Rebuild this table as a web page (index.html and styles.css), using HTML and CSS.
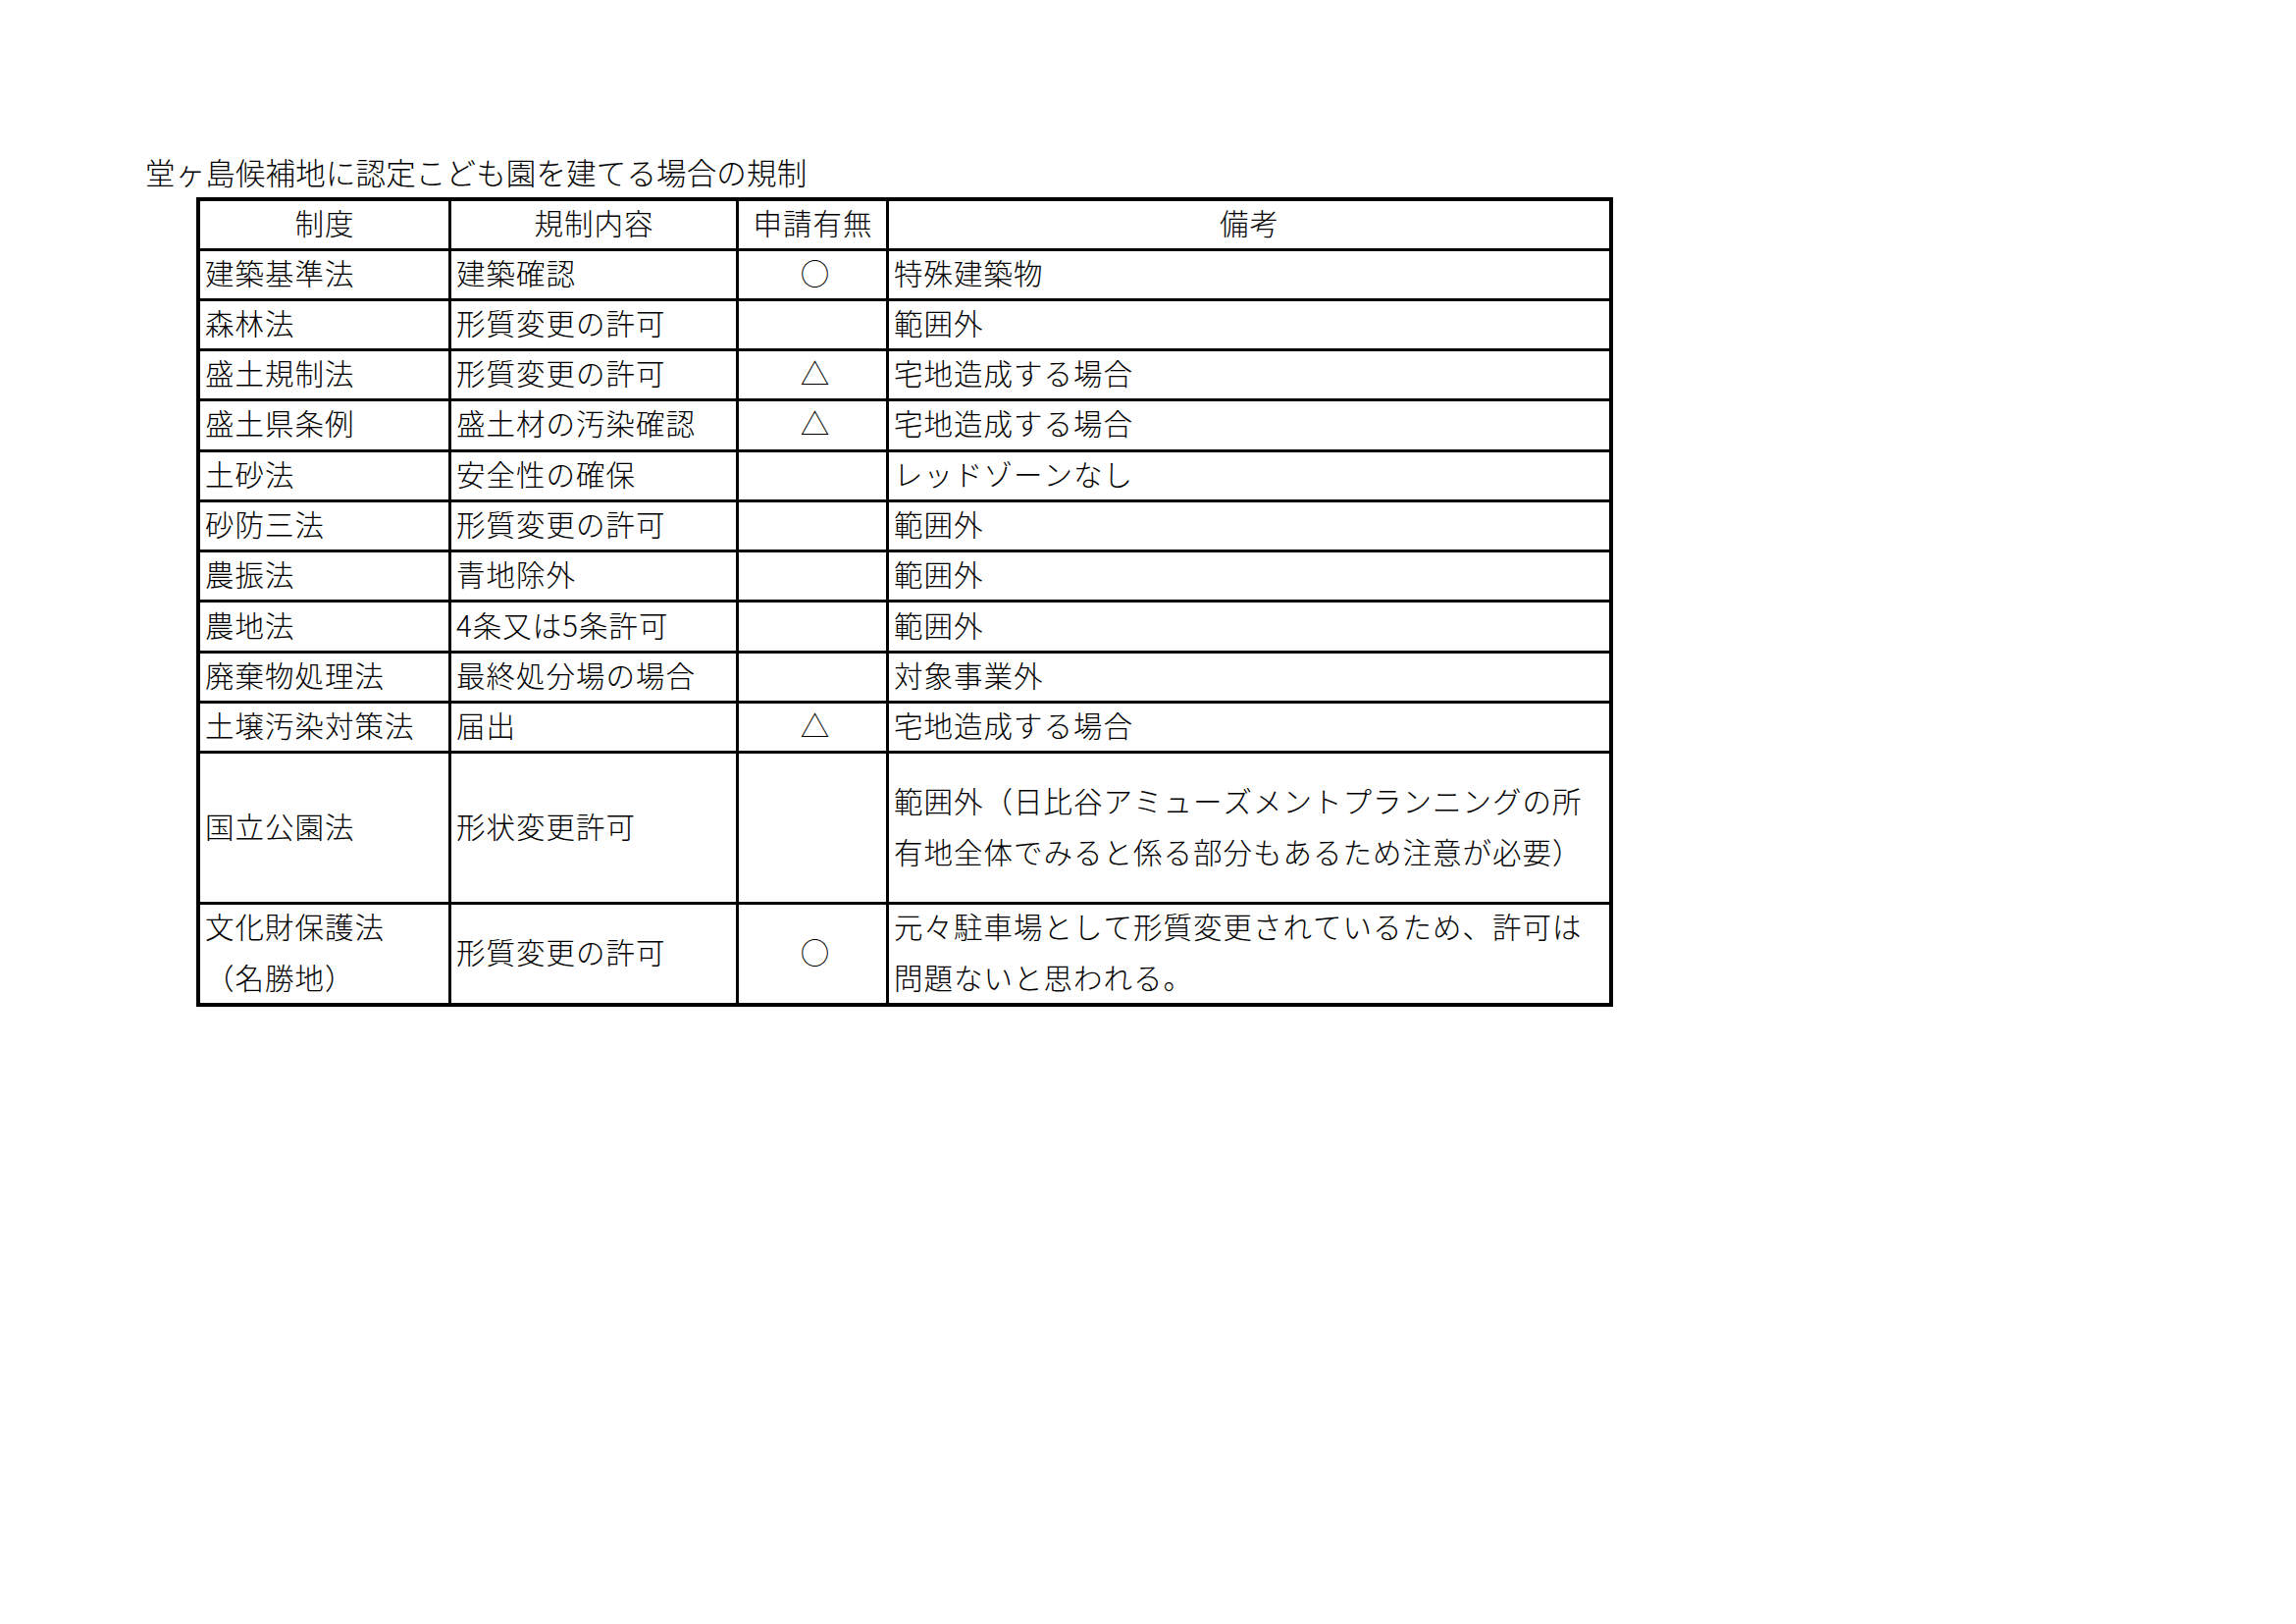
FILE: index.html
```html
<!DOCTYPE html>
<html lang="ja">
<head>
<meta charset="utf-8">
<title>堂ヶ島候補地に認定こども園を建てる場合の規制</title>
<link rel="stylesheet" href="styles.css">
</head>
<body>
<div class="page">
  <h1 class="title">堂ヶ島候補地に認定こども園を建てる場合の規制</h1>
  <div class="sheet">
    <div class="cell center">制度</div>
    <div class="cell center">規制内容</div>
    <div class="cell center">申請有無</div>
    <div class="cell center">備考</div>

    <div class="cell">建築基準法</div>
    <div class="cell">建築確認</div>
    <div class="cell center mark">○</div>
    <div class="cell">特殊建築物</div>

    <div class="cell">森林法</div>
    <div class="cell">形質変更の許可</div>
    <div class="cell center"></div>
    <div class="cell">範囲外</div>

    <div class="cell">盛土規制法</div>
    <div class="cell">形質変更の許可</div>
    <div class="cell center mark">△</div>
    <div class="cell">宅地造成する場合</div>

    <div class="cell">盛土県条例</div>
    <div class="cell">盛土材の汚染確認</div>
    <div class="cell center mark">△</div>
    <div class="cell">宅地造成する場合</div>

    <div class="cell">土砂法</div>
    <div class="cell">安全性の確保</div>
    <div class="cell center"></div>
    <div class="cell">レッドゾーンなし</div>

    <div class="cell">砂防三法</div>
    <div class="cell">形質変更の許可</div>
    <div class="cell center"></div>
    <div class="cell">範囲外</div>

    <div class="cell">農振法</div>
    <div class="cell">青地除外</div>
    <div class="cell center"></div>
    <div class="cell">範囲外</div>

    <div class="cell">農地法</div>
    <div class="cell">4条又は5条許可</div>
    <div class="cell center"></div>
    <div class="cell">範囲外</div>

    <div class="cell">廃棄物処理法</div>
    <div class="cell">最終処分場の場合</div>
    <div class="cell center"></div>
    <div class="cell">対象事業外</div>

    <div class="cell">土壌汚染対策法</div>
    <div class="cell">届出</div>
    <div class="cell center mark">△</div>
    <div class="cell">宅地造成する場合</div>

    <div class="cell">国立公園法</div>
    <div class="cell">形状変更許可</div>
    <div class="cell center"></div>
    <div class="cell"><div class="lines"><span class="ln">範囲外（日比谷アミューズメントプランニングの所</span><span class="ln">有地全体でみると係る部分もあるため注意が必要）</span></div></div>

    <div class="cell"><div class="lines"><span class="ln">文化財保護法</span><span class="ln">（名勝地）</span></div></div>
    <div class="cell">形質変更の許可</div>
    <div class="cell center mark">○</div>
    <div class="cell"><div class="lines"><span class="ln">元々駐車場として形質変更されているため、許可は</span><span class="ln">問題ないと思われる。</span></div></div>
  </div>
</div>
</body>
</html>
```

FILE: styles.css
```css
html, body {
  margin: 0;
  padding: 0;
  background: #ffffff;
}

body {
  width: 2340px;
  height: 1655px;
  overflow: hidden;
  font-family: "Noto Sans CJK JP", "Noto Sans CJK SC", sans-serif;
  font-weight: 300;
  font-kerning: none;
  font-feature-settings: "palt" 0, "kern" 0;
  text-spacing-trim: space-all;
  color: #000000;
}

.page {
  padding-top: 157px;
  padding-left: 148px;
}

.title {
  margin: 0;
  font-size: 30.5px;
  font-weight: 300;
  line-height: 36px;
  letter-spacing: 0.15px;
  white-space: nowrap;
}

.sheet {
  display: grid;
  width: fit-content;
  margin-top: 8px;
  margin-left: 52px;
  grid-template-columns: 253px 290px 150px 734px;
  grid-template-rows: 47.5px repeat(10, 48.28px) 150.84px 99.56px;
  gap: 3px;
  background: #000000;
  border: 4px solid #000000;
}

.cell {
  display: flex;
  align-items: center;
  background: #ffffff;
  padding: 0 2px 6px 5px;
  font-size: 29.5px;
  line-height: 52px;
  letter-spacing: 1px;
  white-space: nowrap;
  overflow: hidden;
}

.center {
  justify-content: center;
  padding: 0 0 6px 1px;
}

.mark {
  padding-left: 5px;
  letter-spacing: 0;
}

.lines {
  display: flex;
  flex-direction: column;
  width: 100%;
}

.ln {
  display: block;
}
```
